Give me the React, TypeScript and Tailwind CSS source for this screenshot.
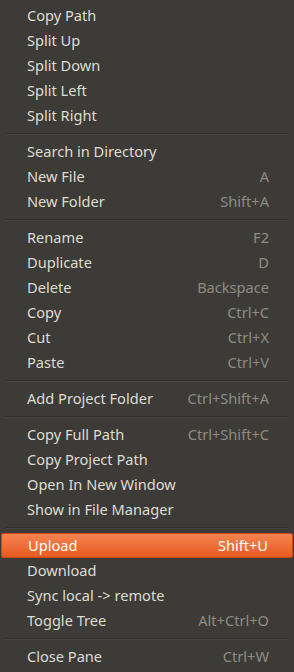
type Item = { label: string; shortcut?: string; active?: boolean };

const groups: Item[][] = [
  [
    { label: 'Copy Path' },
    { label: 'Split Up' },
    { label: 'Split Down' },
    { label: 'Split Left' },
    { label: 'Split Right' },
  ],
  [
    { label: 'Search in Directory' },
    { label: 'New File', shortcut: 'A' },
    { label: 'New Folder', shortcut: 'Shift+A' },
  ],
  [
    { label: 'Rename', shortcut: 'F2' },
    { label: 'Duplicate', shortcut: 'D' },
    { label: 'Delete', shortcut: 'Backspace' },
    { label: 'Copy', shortcut: 'Ctrl+C' },
    { label: 'Cut', shortcut: 'Ctrl+X' },
    { label: 'Paste', shortcut: 'Ctrl+V' },
  ],
  [{ label: 'Add Project Folder', shortcut: 'Ctrl+Shift+A' }],
  [
    { label: 'Copy Full Path', shortcut: 'Ctrl+Shift+C' },
    { label: 'Copy Project Path' },
    { label: 'Open In New Window' },
    { label: 'Show in File Manager' },
  ],
  [
    { label: 'Upload', shortcut: 'Shift+U', active: true },
    { label: 'Download' },
    { label: 'Sync local -> remote' },
    { label: 'Toggle Tree', shortcut: 'Alt+Ctrl+O' },
  ],
  [{ label: 'Close Pane', shortcut: 'Ctrl+W' }],
];

export default function App() {
  return (
    <div
      className="w-[294px] h-[672px] bg-[#3c3b37] py-[3px] text-[14.6px] text-[#dfdbd2] overflow-hidden"
      style={{ fontFamily: '"Noto Sans", "Open Sans", sans-serif' }}
    >
      {groups.map((group, gi) => (
        <div key={gi}>
          {gi > 0 && <Separator />}
          {group.map((item) => (
            <MenuRow key={item.label} item={item} />
          ))}
        </div>
      ))}
    </div>
  );
}

function Separator() {
  return (
    <div className="h-[11px] flex items-center px-[6px]">
      <div className="w-full border-t border-[#2f2e2b] border-b border-b-[#46453f]" />
    </div>
  );
}

function MenuRow({ item }: { item: Item }) {
  if (item.active) {
    return (
      <div className="mx-[1px] h-[25px] flex items-center justify-between pl-[26px] pr-[24px] rounded-[2px] border border-[#c9481a] bg-gradient-to-b from-[#f5834f] to-[#e75a1d] text-white">
        <span>{item.label}</span>
        <span>{item.shortcut}</span>
      </div>
    );
  }
  return (
    <div className="h-[25px] flex items-center justify-between pl-[27px] pr-[25px]">
      <span>{item.label}</span>
      {item.shortcut && <span className="text-[#8f8b83]">{item.shortcut}</span>}
    </div>
  );
}
